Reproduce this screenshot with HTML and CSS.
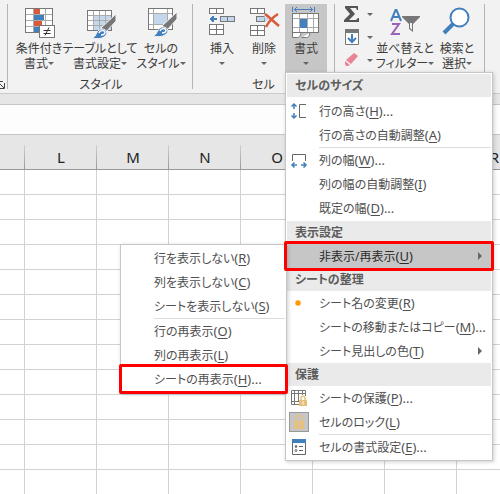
FILE: index.html
```
<!DOCTYPE html>
<html lang="ja">
<head>
<meta charset="utf-8">
<meta name="viewport" content="width=device-width, initial-scale=1">
<title>Excel</title>
<link rel="stylesheet" href="styles.css">
</head>
<body>
<header class="ribbon">
  <div class="group group--edge">
    <button class="launcher" aria-label="オプション"><svg width="5" height="8" viewBox="3 0 5 8" fill="none" stroke="#444"><path d="M3 .5h3M3 7.500h4.500V2M3 3l4 4M3.500 6.500"/></svg></button>
  </div>
  <div class="group group--styles">
    <div class="tools">
      <button class="tool tool--cond">
        <svg width="32" height="32" viewBox="0 0 32 32">
          <g shape-rendering="crispEdges"><path fill="#fff" d="M2 0h28v25H2z"/><path fill="#d9593b" d="M11 1h6v5h-6zM11 13h8v5h-8z"/><path fill="#427fbd" d="M11 7h10v5H11zM11 19h5v5h-5z"/><path fill="none" stroke="#aaa" d="M2 6.500h27M2 12.500h27M2 18.500h27M10.500 0v25M22.500 0v25"/><path fill="none" stroke="#777" d="M2.500.5h27v24h-27z"/><path fill="#fff" stroke="#777" d="M16.500 17.500h15v12h-15z"/></g>
          <path fill="none" stroke="#333" d="M20.500 22.500h7M20.500 25.500h7M26 19.500l-4 8"/>
        </svg>
        <span>条件付き<br>書式<i class="caret"></i></span>
      </button>
      <button class="tool tool--table">
        <svg width="32" height="32" viewBox="0 0 32 32">
          <g shape-rendering="crispEdges"><path fill="#fff" d="M3 2h25v20H3z"/><path fill="#c5d7ec" d="M9 8h18v14H9z"/><path fill="none" stroke="#aaa" d="M3 7.500h25M3 12.500h25M3 17.500h25M9.500 2v20M15.500 2v20M21.500 2v20"/><path fill="none" stroke="#777" d="M3.500 2.500h24v20h-24z"/></g>
          <path fill="#777" stroke="#f2f2f2" d="M32 6v7L22 24l-5-4z"/><path fill="#427fbd" stroke="#f2f2f2" d="M8 30c5-1 4-9 10-9 6 0 6 6 2 8-3 2-8 2-12 1z"/><path fill="none" stroke="#fff" stroke-width="1.500" d="M15 25c1-3 5-3 6-1 0 2-2 3-4 3"/>
        </svg>
        <span>テーブルとして<br>書式設定<i class="caret"></i></span>
      </button>
      <button class="tool tool--cell">
        <svg width="32" height="32" viewBox="0 0 32 32">
          <g shape-rendering="crispEdges"><path fill="#fff" d="M3 0h25v22H3z"/><path fill="#c5d7ec" d="M8 5h15v12H8z"/><path fill="none" stroke="#aaa" d="M3 5.500h25M3 16.500h25M8.500 0v22M22.500 0v22"/><path fill="none" stroke="#777" d="M3.500.5h24v21h-24z"/></g>
          <path fill="#777" stroke="#f2f2f2" d="M32 4v7L22 22l-5-4z"/><path fill="#427fbd" stroke="#f2f2f2" d="M8 28c5-1 4-9 10-9 6 0 6 6 2 8-3 2-8 2-12 1z"/><path fill="none" stroke="#fff" stroke-width="1.500" d="M15 23c1-3 5-3 6-1 0 2-2 3-4 3"/>
        </svg>
        <span>セルの<br>スタイル<i class="caret"></i></span>
      </button>
    </div>
    <p class="group-name">スタイル</p>
  </div>
  <div class="group group--cells">
    <div class="tools">
      <button class="tool">
        <svg width="32" height="32" viewBox="0 0 32 32" shape-rendering="crispEdges">
          <path fill="#fff" stroke="#777" d="M3.500.5h14v5h-14zM10.500.5v5M3.500 16.500h14v10h-14zM3.500 21.500h14M10.500 16.500v10"/><path fill="#c5d7ec" stroke="#777" d="M14.500 8.500h14v5h-14zM21.500 8.500v5"/><path fill="#427fbd" d="M4 10h7v2H4zM6 8h2v6H6zM5 9h2v4H5z"/>
        </svg>
        <span>挿入<br><i class="caret"></i></span>
      </button>
      <button class="tool">
        <svg width="32" height="32" viewBox="0 0 32 32">
          <g shape-rendering="crispEdges"><path fill="#fff" stroke="#777" d="M2.500.5h14v5h-14zM9.500.5v5M2.500 17.500h14v10h-14zM2.500 22.500h14M9.500 17.500v10"/><path fill="#c5d7ec" stroke="#777" d="M8.500 8.500h8v5h-8z"/></g><path fill="#c5d7ec" d="M16 8l5 3-4 3z"/><path fill="none" stroke="#d9593b" stroke-width="2.500" d="M17 6c4 3 8 7 14 12M30 6c-5 3-9 7-12 13"/>
        </svg>
        <span>削除<br><i class="caret"></i></span>
      </button>
      <button class="tool tool--open" aria-expanded="true">
        <svg width="32" height="32" viewBox="0 0 32 32">
          <g shape-rendering="crispEdges"><path fill="#fff" stroke="#777" d="M2.500 5.500h26v19h-26z"/><path fill="none" stroke="#aaa" d="M3 10.500h25M3 19.500h25M9.500 6v18M17.500 6v18M23.500 6v18"/><path fill="#427fbd" d="M10 11h7v9h-7z"/><path fill="none" stroke="#427fbd" d="M2.500-1v5M24.500-1v5M4 1.500h19"/></g>
          <path fill="none" stroke="#427fbd" d="M7-1L4.500 1.500 7 4M20-1l2.500 2.500L20 4"/><path fill="#fff" stroke="#777" d="M2.500 25v4.500h5c2 0 3-1.500 3.500-4.500M11.500 29.500h5c2 0 3-1.500 3.500-4.500"/>
        </svg>
        <span>書式<br><i class="caret"></i></span>
      </button>
    </div>
    <p class="group-name">セル</p>
  </div>
  <div class="group group--edit">
    <div class="tools">
      <div class="minis">
        <button class="mini" aria-label="オート SUM"><svg width="18" height="18" viewBox="0 0 18 18"><path fill="#555" d="M2 1h13v4h-1l-1-2H7l5 6-6 6h7l2-2h1v4H1v-2l6-6-5-6z"/></svg><i class="caret"></i></button>
        <button class="mini" aria-label="フィル"><svg width="18" height="18" viewBox="0 0 18 18"><path fill="#fff" stroke="#777" d="M2.500 1.500h13v15h-13z"/><path fill="#777" d="M2 1h14v4H2z"/><path fill="none" stroke="#427fbd" stroke-width="2" d="M9 6v8M5 10l4 4 4-4"/></svg><i class="caret"></i></button>
        <button class="mini" aria-label="クリア"><svg width="18" height="18" viewBox="0 0 18 18"><path fill="#e98495" d="M11 2l4 3-7 8-5-4z"/><path fill="#e98495" d="M2 10l5 4-2 1H3l-1-2z"/></svg><i class="caret"></i></button>
      </div>
      <button class="tool tool--sort">
        <svg width="32" height="32" viewBox="0 0 32 32"><path fill="none" stroke="#427fbd" stroke-width="2" d="M2 13L6.500 2h1L12 13M4 9h6"/><path fill="none" stroke="#9a62b8" stroke-width="2" d="M3 16h7L3 26h8"/><path fill="#777" d="M13 8h18v1l-7 7v8l-4-3v-5l-7-7z"/><path fill="#f2f2f2" d="M21 15h2v7l-2-2z"/></svg>
        <span>並べ替えと<br>フィルター<i class="caret"></i></span>
      </button>
      <button class="tool tool--find">
        <svg width="32" height="32" viewBox="0 0 32 32"><circle cx="18.500" cy="9.500" r="9" fill="#fff" stroke="#427fbd" stroke-width="2"/><path stroke="#427fbd" stroke-width="4" d="M12 16L3 25"/></svg>
        <span>検索と<br>選択<i class="caret"></i></span>
      </button>
    </div>
  </div>

  <div class="menu" role="menu" aria-label="書式">
    <h2>セルのサイズ</h2>
    <ul class="spaced">
      <li><button><span class="icon"><svg width="18" height="18" viewBox="0 0 18 18" fill="none"><path stroke="#666" d="M16 2.500H9.500v13H16"/><path stroke="#427fbd" stroke-width="1.500" d="M4 2v5M4 11v5M1.500 4.500L4 2l2.500 2.500M1.500 13.500L4 16l2.500-2.500"/></svg></span><span>行の高さ<span class="key">(<u>H</u>)...</span></span></button></li>
      <li><button><span class="icon"></span><span>行の高さの自動調整<span class="key">(<u>A</u>)</span></span></button></li>
      <li class="rule"><button><span class="icon"><svg width="18" height="18" viewBox="0 0 18 18" fill="none"><path stroke="#666" d="M2.500 10V3.500h13V10"/><path stroke="#427fbd" stroke-width="1.500" d="M2 14h5M11 14h5M4.500 11.500L2 14l2.500 2.500M13.500 11.500L16 14l-2.500 2.500"/></svg></span><span>列の幅<span class="key">(<u>W</u>)...</span></span></button></li>
      <li><button><span class="icon"></span><span>列の幅の自動調整<span class="key">(<u>I</u>)</span></span></button></li>
      <li><button><span class="icon"></span><span>既定の幅<span class="key">(<u>D</u>)...</span></span></button></li>
    </ul>
    <h2>表示設定</h2>
    <ul>
      <li class="marked">
        <button class="current" aria-expanded="true"><span class="icon"></span><span>非表示/再表示<span class="key">(<u>U</u>)</span></span><i class="more"></i></button>
        <div class="submenu" role="menu" aria-label="非表示/再表示">
          <ul>
            <li><button><span>行を表示しない<span class="key">(<u>R</u>)</span></span></button></li>
            <li><button><span>列を表示しない<span class="key">(<u>C</u>)</span></span></button></li>
            <li><button><span>シートを表示しない<span class="key">(<u>S</u>)</span></span></button></li>
            <li class="rule"><button><span>行の再表示<span class="key">(<u>O</u>)</span></span></button></li>
            <li><button><span>列の再表示<span class="key">(<u>L</u>)</span></span></button></li>
            <li class="marked"><button><span>シートの再表示<span class="key">(<u>H</u>)...</span></span></button></li>
          </ul>
        </div>
      </li>
    </ul>
    <h2>シートの整理</h2>
    <ul>
      <li><button><span class="icon"><svg width="18" height="18" viewBox="0 0 18 18"><circle cx="8" cy="9" r="2.700" fill="#f90"/></svg></span><span>シート名の変更<span class="key">(<u>R</u>)</span></span></button></li>
      <li><button><span class="icon"></span><span>シートの移動またはコピー<span class="key">(<u>M</u>)...</span></span></button></li>
      <li><button><span class="icon"></span><span>シート見出しの色<span class="key">(<u>T</u>)</span></span><i class="more"></i></button></li>
    </ul>
    <h2>保護</h2>
    <ul>
      <li><button><span class="icon"><svg width="18" height="18" viewBox="0 0 18 18"><path fill="none" stroke="#777" d="M1.500 1.500h14V7M1.500 1.500v14H9M1 4.500h14M1 12.500h8M4.500 1v15M8.500 1v12M12.500 1v5"/><path fill="#e8c07d" d="M9 11h8v6H9z"/><path fill="none" stroke="#e8c07d" stroke-width="1.500" d="M11 11V9c0-2.500 4-2.500 4 0v2"/><path fill="#fff" d="M12.500 12.500h1v3h-1z"/></svg></span><span>シートの保護<span class="key">(<u>P</u>)...</span></span></button></li>
      <li><button><span class="icon icon--on"><svg width="18" height="18" viewBox="0 0 18 18"><path fill="#e8c07d" d="M4 8h10v8H4z"/><path fill="none" stroke="#e8c07d" stroke-width="1.500" d="M6 8V5.500c0-4 6-4 6 0V8"/><path fill="#c6c6c6" d="M8 10h2v2H9.500v2h-1v-2H8z"/></svg></span><span>セルのロック<span class="key">(<u>L</u>)</span></span></button></li>
      <li class="rule"><button><span class="icon"><svg width="18" height="18" viewBox="0 0 18 18"><path fill="#fff" stroke="#666" d="M2.500 2.500h13v14h-13z"/><path fill="#427fbd" d="M2 1h14v4H2z"/><path stroke="#666" d="M9 8.500h4M9 12.500h4"/><circle cx="6" cy="8.500" r="1.300" fill="#666"/><circle cx="6" cy="12.500" r="1" fill="none" stroke="#666"/></svg></span><span>セルの書式設定<span class="key">(<u>E</u>)...</span></span></button></li>
    </ul>
  </div>
</header>
<div class="formula"><input type="text" aria-label="数式バー"></div>
<main class="sheet">
  <table>
    <colgroup><col class="first"><col><col><col><col><col><col><col class="last"></colgroup>
    <thead><tr><th></th><th>L</th><th>M</th><th>N</th><th>O</th><th>P</th><th>Q</th><th>R</th></tr></thead>
    <tbody>
      <tr><td></td><td></td><td></td><td></td><td></td><td></td><td></td><td></td></tr>
      <tr><td></td><td></td><td></td><td></td><td></td><td></td><td></td><td></td></tr>
      <tr><td></td><td></td><td></td><td></td><td></td><td></td><td></td><td></td></tr>
      <tr><td></td><td></td><td></td><td></td><td></td><td></td><td></td><td></td></tr>
      <tr><td></td><td></td><td></td><td></td><td></td><td></td><td></td><td></td></tr>
      <tr><td></td><td></td><td></td><td></td><td></td><td></td><td></td><td></td></tr>
      <tr><td></td><td></td><td></td><td></td><td></td><td></td><td></td><td></td></tr>
      <tr><td></td><td></td><td></td><td></td><td></td><td></td><td></td><td></td></tr>
      <tr><td></td><td></td><td></td><td></td><td></td><td></td><td></td><td></td></tr>
      <tr><td></td><td></td><td></td><td></td><td></td><td></td><td></td><td></td></tr>
      <tr><td></td><td></td><td></td><td></td><td></td><td></td><td></td><td></td></tr>
      <tr><td></td><td></td><td></td><td></td><td></td><td></td><td></td><td></td></tr>
      <tr><td></td><td></td><td></td><td></td><td></td><td></td><td></td><td></td></tr>
    </tbody>
  </table>
</main>
</body>
</html>
```

FILE: styles.css
```
* { box-sizing: border-box; }

body {
  margin: 0;
  height: 100vh;
  overflow: hidden;
  background: #fff;
  color: #3c3c3c;
  font: 12px/15px "Noto Sans", "Noto Sans CJK JP", sans-serif;
  font-feature-settings: "palt";
}

button {
  margin: 0;
  padding: 0;
  border: 0;
  background: none;
  color: inherit;
  font: inherit;
  font-feature-settings: inherit;
}

h2, p, ul { margin: 0; padding: 0; }
ul { list-style: none; }
svg { display: block; overflow: visible; }

/* Ribbon */
.ribbon {
  position: relative;
  display: flex;
  height: 94px;
  padding-top: 4px;
  background: #f2f2f2;
  border-bottom: 1px solid #cacaca;
}

.group {
  display: flex;
  flex-direction: column;
  height: 85px;
  border-right: 1px solid #b4b4b4;
}

.group--edge { width: 8px; justify-content: flex-end; }
.launcher { width: 5px; }
.group--styles { width: 185px; padding-left: 2px; }
.group--cells { width: 142px; padding-left: 8px; }
.group--edit { width: 150px; padding-left: 8px; }

.tools { display: flex; flex-shrink: 0; }
.group-name { padding-right: 8px; text-align: center; line-height: 22px; }
.group--styles .group-name { padding-right: 0; }

.tool {
  display: flex;
  flex-direction: column;
  align-items: center;
  gap: 1px;
  width: 42px;
  height: 70px;
  padding-top: 4px;
  white-space: nowrap;
}

.tool--cond { width: 58px; }
.tool--table { width: 64px; }
.tool--cell { width: 58px; }
.tool--sort { width: 60px; }
.tool--find { width: 44px; }
.tool--open { background: #c6c6c6; }

.caret {
  display: inline-block;
  margin-left: 5px;
  vertical-align: 3px;
  border: 3px solid transparent;
  border-top-color: #666;
  border-bottom: 0;
}

br + .caret { margin-left: 0; }

.minis { display: flex; flex-direction: column; gap: 5px; width: 32px; padding-top: 1px; }
.mini { display: flex; align-items: center; gap: 6px; height: 18px; }
.mini .caret { margin: 0; }

/* Menus */
.menu, .submenu {
  position: absolute;
  z-index: 2;
  background: #fff;
  border: 1px solid #c6c6c6;
  box-shadow: 1px 1px 4px rgba(0, 0, 0, 0.2);
  color: #505050;
}

.menu { top: 72px; left: 285px; width: 208px; padding: 1px; }
.submenu { top: 0; left: -167px; width: 167px; padding: 1px; }

.menu h2 {
  height: 23px;
  padding-left: 8px;
  background: #eaeaea;
  color: #5c5c5c;
  font-size: 12px;
  font-weight: 700;
  line-height: 23px;
}

.spaced { padding: 2px 0 1px; }
.menu li { position: relative; }

.menu li button {
  display: flex;
  align-items: center;
  width: 100%;
  height: 24px;
  white-space: nowrap;
  line-height: 18px;
}

.submenu li button { padding-left: 32px; }
.menu .current { background: #c6c6c6; color: #2c2c2c; }
.key { font-size: 13px; }
u { text-underline-offset: 2px; }

.icon {
  display: flex;
  align-items: center;
  justify-content: center;
  width: 20px;
  height: 20px;
  margin: 0 10px 0 2px;
}

.icon--on { background: #c6c6c6; outline: 1px solid #999; outline-offset: -1px; }

.more {
  margin-left: auto;
  margin-right: 9px;
  border: 4px solid transparent;
  border-left-color: #666;
  border-right: 0;
}

.rule { padding-top: 1px; }

.rule::before {
  content: "";
  position: absolute;
  top: 0;
  right: 0;
  left: 32px;
  height: 1px;
  background: #dcdcdc;
}

.marked::after {
  content: "";
  position: absolute;
  z-index: 3;
  inset: -3px;
  border: 3px solid #f00;
  border-radius: 2px;
  pointer-events: none;
}

/* Formula bar */
.formula { padding-top: 10px; background: #e6e6e6; }

.formula input {
  display: block;
  width: 100%;
  height: 31px;
  border: 1px solid #c6c6c6;
  border-width: 1px 0;
  background: #fdfdfd;
}

/* Sheet */
.sheet { padding-top: 10px; background: linear-gradient(#e6e6e6 10px, #fff 10px); }
table { table-layout: fixed; width: 100%; border-collapse: separate; border-spacing: 0; }
col { width: 72px; }
.first { width: 25px; }
.last { width: auto; }

th {
  height: 25px;
  padding: 0;
  border-bottom: 1px solid #999;
  background: linear-gradient(#d0d0d0, #999) right / 1px 100% no-repeat #e6e6e6;
  color: #222;
  font-size: 15px;
  font-weight: 400;
  line-height: 24px;
}

th:last-child { padding-right: 1px; text-align: right; background: #e6e6e6; }

td {
  height: 25px;
  padding: 0;
  border-right: 1px solid #d2d2d2;
  border-bottom: 1px solid #d2d2d2;
}

td:last-child { border-right: 0; }
```
